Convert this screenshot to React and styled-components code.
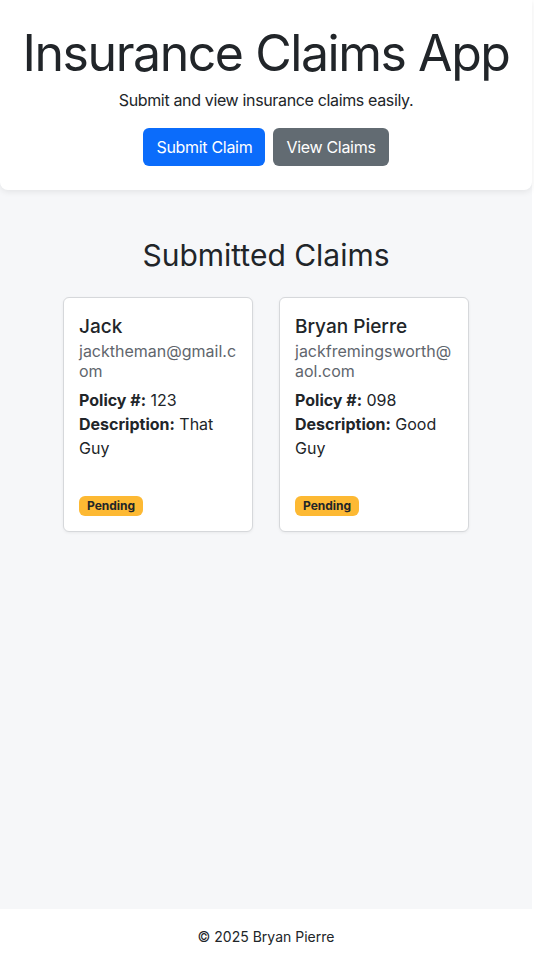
import React from 'react'
import styled, { createGlobalStyle } from 'styled-components'

const claims = [
    { id: 1, name: 'Jack', email: 'jacktheman@gmail.com', policy: '123', description: 'That Guy', status: 'Pending' },
    { id: 2, name: 'Bryan Pierre', email: 'jackfremingsworth@aol.com', policy: '098', description: 'Good Guy', status: 'Pending' },
]

const App = () => {
    return (
        <>
            <GlobalStyle />
            <Page>
                <Header>
                    <Title>Insurance Claims App</Title>
                    <Lead>Submit and view insurance claims easily.</Lead>
                    <Actions>
                        <Button $variant="primary">Submit Claim</Button>
                        <Button $variant="secondary">View Claims</Button>
                    </Actions>
                </Header>
                <Main>
                    <SectionTitle>Submitted Claims</SectionTitle>
                    <Cards>
                        {claims.map((claim) => (
                            <Card key={claim.id}>
                                <CardTitle>{claim.name}</CardTitle>
                                <CardSubtitle>{claim.email}</CardSubtitle>
                                <Field><strong>Policy #:</strong> {claim.policy}</Field>
                                <Field><strong>Description:</strong> {claim.description}</Field>
                                <Badge>{claim.status}</Badge>
                            </Card>
                        ))}
                    </Cards>
                </Main>
                <Footer>© 2025 Bryan Pierre</Footer>
            </Page>
        </>
    )
}

const GlobalStyle = createGlobalStyle`
    body{
        margin:0;
        background:#fff;
        font-family:Inter, "Liberation Sans", sans-serif;
        color:#212529;
    }
`

const Page = styled.div`
    width:532px;
    min-height:965px;
    display:flex;
    flex-direction:column;
    background:#f6f7f9;
`

const Header = styled.header`
    background:#fff;
    border-radius:0 0 8px 8px;
    box-shadow:0 2px 6px rgba(0,0,0,0.08);
    padding:23px 0 24px;
    text-align:center;
`

const Title = styled.h1`
    margin:0 0 5px;
    font-size:50px;
    font-weight:400;
    line-height:60px;
    letter-spacing:-1.45px;
    white-space:nowrap;
`

const Lead = styled.p`
    margin:0;
    font-size:16px;
    line-height:24px;
    letter-spacing:-0.35px;
`

const Actions = styled.div`
    display:flex;
    justify-content:center;
    gap:8px;
    margin-top:16px;
`

const Button = styled.button`
    font-family:inherit;
    font-size:16px;
    line-height:24px;
    letter-spacing:-0.3px;
    padding:7px 13px;
    border:none;
    border-radius:6px;
    color:#fff;
    background:${(p) => (p.$variant === 'primary' ? '#0b6cfb' : '#626b72')};
`

const Main = styled.main`
    flex:1;
    padding-top:48px;
`

const SectionTitle = styled.h2`
    margin:0 0 24px;
    text-align:center;
    font-size:30px;
    font-weight:400;
    line-height:35px;
`

const Cards = styled.div`
    display:flex;
    justify-content:center;
    gap:26px;
`

const Card = styled.div`
    width:190px;
    box-sizing:border-box;
    background:#fff;
    border:1px solid #d6d8db;
    border-radius:6px;
    box-shadow:0 1px 3px rgba(0,0,0,0.06);
    padding:17px 15px 15px;
`

const CardTitle = styled.h5`
    margin:0 0 2px;
    font-size:19px;
    font-weight:500;
    line-height:24px;
`

const CardSubtitle = styled.h6`
    margin:0 0 7px;
    font-size:16px;
    font-weight:400;
    line-height:20px;
    color:#5f666d;
    word-break:break-all;
`

const Field = styled.p`
    margin:0;
    font-size:16px;
    line-height:24px;
    strong{
        font-weight:700;
    }
`

const Badge = styled.span`
    display:inline-block;
    margin-top:36px;
    padding:4px 8px;
    font-size:12px;
    font-weight:700;
    line-height:12px;
    border-radius:6px;
    background:#fdb933;
    color:#212529;
`

const Footer = styled.footer`
    background:#fff;
    padding:16px 0;
    text-align:center;
    font-size:14px;
    line-height:24px;
`

export default App
